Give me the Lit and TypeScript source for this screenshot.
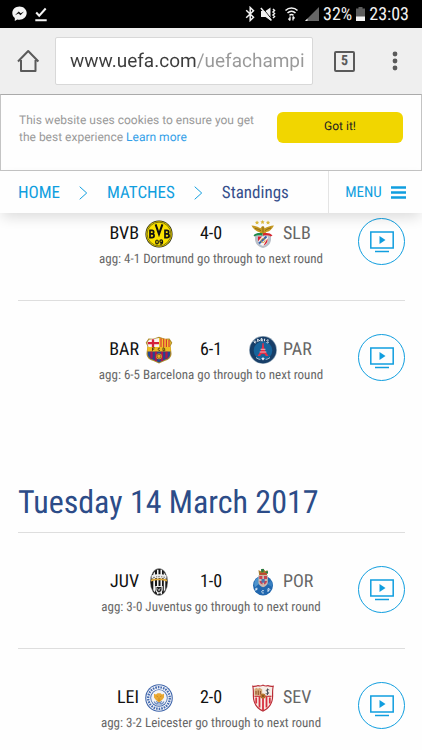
import { LitElement, html, svg, css, nothing, TemplateResult } from "lit";
import { customElement, property } from "lit/decorators.js";

interface Team { code: string; crest: string; }
interface Match { home: Team; away: Team; score: string; note: string; }

const CRESTS: Record<string, TemplateResult> = {
  bvb: svg`
    <circle cx="14" cy="14" r="13.6" fill="#2a2a12"/>
    <circle cx="14" cy="14" r="12.8" fill="#fce300"/>
    <circle cx="14" cy="14" r="11.9" fill="none" stroke="#4a4512" stroke-width=".7"/>
    <g fill="none" stroke="#111" stroke-width="1.7" stroke-linejoin="miter">
      <path d="M5 10v8M4.2 10.4H7c2.3 0 2.3 3.4 0 3.4H5M7 13.8c2.8 0 2.8 3.9 0 3.9H4.2"/>
      <path d="M20 10v8M19.2 10.4H22c2.3 0 2.3 3.4 0 3.4H20M22 13.8c2.8 0 2.8 3.9 0 3.9H19.2"/>
      <path d="M10.6 4.4 14 14.2 17.4 4.4" stroke-width="2"/>
    </g>
    <g fill="none" stroke="#111" stroke-width="1.2">
      <ellipse cx="12" cy="22" rx="1.3" ry="2"/><circle cx="16.2" cy="21.2" r="1.3"/><path d="M17.5 21v1.4c0 1.6-1.6 1.9-2.6 1.4"/>
    </g>`,
  slb: svg`
    <g fill="#e0bd3c"><path d="m8 .4.7 1.3 1.4.2-1 1 .3 1.5L8 3.700l-1.300.7.3-1.500-1.100-1 1.500-.2zM13.500 0l.7 1.300 1.400.2-1 1 .3 1.500-1.400-.7-1.300.7.3-1.500-1.100-1 1.500-.2zM19 .4l.7 1.300 1.400.2-1 1 .3 1.500-1.400-.7-1.300.7.3-1.500-1.100-1 1.500-.2z"/></g>
    <path d="M2.500 5.500c3.500.3 6.500 1.200 9 2.700l1.500-2 2 .2.600 1.900c2.600-1.700 5.700-2.700 9.400-2.900-2.300 4.200-5 6-7.600 6.700l-2 2.400h-3l-1.800-2.300C7.300 11.200 4.500 9.400 2.500 5.500z" fill="#c69a22"/>
    <path d="M6 8.500c2.500.3 4.500 1.100 6 2.200M22 8c-2.500.5-4.500 1.500-6 2.600M14 6.500v6" stroke="#7f5d16" fill="none" stroke-width=".8"/>
    <path d="M6 15h16v4c0 4.500-3 7.600-8 9-5-1.400-8-4.500-8-9z" fill="#b9bfc8"/>
    <path d="M4.500 15.500c2-2.500 5-3 9-2.300v2.500c-3-.6-6-.4-7.700.7z" fill="#1e8a4b"/>
    <path d="M23.500 15.500c-2-2.500-5-3-9.500-2.300v2.500c3-.6 6-.4 7.700.7z" fill="#d8262f"/>
    <path d="M9 16.500h10v3c0 3.300-2 5.500-5 6.500-3-1-5-3.200-5-6.500z" fill="#f4f4f4"/>
    <path d="M9 16.500h4l-4 5z" fill="#da1f30"/>
    <path d="m10 23.500 7.500-7" stroke="#315fb0" stroke-width="2"/>
    <path d="M18.500 18.500v2.500c-.6 2.300-2 3.800-4 4.600z" fill="#da1f30"/>
    <circle cx="14" cy="20.500" r="2" fill="none" stroke="#d19b2b" stroke-width=".8"/>`,
  bar: svg`
    <path d="M3.500 2.500 8 2.800 14 .7l6 2.100 4.500-.3 2.800 4.200-1.700 3.300.9 7.500c0 4-3 6.500-7 7.500L14 27.600 8.500 25c-4-1-7-3.500-7-7.500l.9-7.500L.7 6.700z" fill="#ae8b2c"/>
    <path d="M4 3.700 14 2v9H3.500L2.200 6.800z" fill="#f8f3f0"/>
    <path d="M8 3.200v7.800M2.800 7.200H14" stroke="#d41f3a" stroke-width="2.300"/>
    <path d="m14 2 10 1.700 1.800 3.100-1.300 4.200H14z" fill="#f4c52f"/>
    <path d="M16 2.300V11M18.700 2.800V11M21.400 3.200V11M24 4v7" stroke="#d73932" stroke-width="1.200"/>
    <path d="M2.800 15.500h22.400v2.300c0 3.400-2.600 5.400-6.200 6.200L14 26.400 9 24c-3.600-.8-6.200-2.800-6.200-6.200z" fill="#254590"/>
    <path d="M6.500 15.500v7M11 15.500V25M17 15.500V25M21.500 15.500v7" stroke="#ad174c" stroke-width="2.300"/>
    <path d="M2.300 11h23.400v4.300H2.300z" fill="#efbd20"/>
    <path d="M7.500 14.800v-3h2.200M7.500 13.200h1.700M15 12.200c-2.500-1-2.500 3 0 2.200M18 11.800v3h1.300c1.400-.5 1-1.300-.2-1.500.9-.5.600-1.500-1.100-1.500z" fill="none" stroke="#4b3517" stroke-width=".9"/>
    <circle cx="14" cy="20.300" r="2.900" fill="#e8ad27"/><path d="m12 19 2-.8 2 1.200-.4 2.400-2 .6-1.600-1.300z" fill="none" stroke="#6b4c24" stroke-width=".7"/>`,
  par: svg`
    <circle cx="14" cy="14" r="13.900" fill="#8fa3b5"/>
    <circle cx="14" cy="14" r="13.200" fill="#173e68"/>
    <circle cx="14" cy="14.500" r="9.300" fill="#17649c"/>
    <path d="m6.200 7.400-1.400-2M5 5.500c1.400-1.300 2.500.2 1.400 1.300M9 6 8.500 3.200l2.600 1.800M12.200 5.300 12 2.700c2-.4 2.200 1.200.3 1.400l1.700 1M15.700 2.700l-.3 2.500M19.700 4.200c-2.300-1-2.300.7-.8 1.300 1.200.7 0 2-1.400 1" fill="none" stroke="#eef3f7" stroke-width="1"/>
    <path d="M13.500 7h1l.6 4.500 1.500 4 2.900 4.500h-2.700c-.6-1.600-1.500-2.300-2.800-2.300s-2.200.7-2.800 2.300H8.500l2.900-4.500 1.500-4z" fill="#e52e47"/>
    <path d="M11.500 13.300h5M10.600 16h6.800" stroke="#f7e8e8" stroke-width=".7"/>
    <path d="M7 21.500c1.500 1.200 3 1.700 4.300 2M21 21.500c-1.500 1.200-3 1.700-4.300 2" stroke="#b9d0e0" fill="none" stroke-width="1"/>
    <path d="m12.300 22.500 1.700 2 1.700-2-1.700-1.300z" fill="#e6edf2"/>`,
  juv: svg`
    <ellipse cx="14" cy="14" rx="9" ry="13.700" fill="#777"/>
    <ellipse cx="14" cy="14" rx="8.300" ry="13" fill="#161616"/>
    <path d="M8.300 5.700 10 3.500v21l-1.700-2.300zM12 1.700h1.500v24.600H12zM15.500 1.700H17v24.600h-1.500zM18.800 4.200l1.500 2.500v14.800l-1.500 2.500z" fill="#f4f4f4"/>
    <path d="M6.500 7.300c4-1.500 11-1.500 15 0v3.500c-4-1.200-11-1.200-15 0z" fill="#eee"/>
    <path d="M6 11.500c4.500-1.400 11.500-1.400 16 0v1.900c-4.500-1.500-11.500-1.500-16 0z" fill="#dda73b"/>
    <path d="M8 9.400h2M11 8.800h1.200M13.200 8.700h1.600M16 8.800h1.400M18.400 9.200H20" stroke="#777" stroke-width="1"/>
    <path d="M10.300 18h7.400v3.700c0 2-1.600 3.300-3.700 4-2.100-.7-3.700-2-3.700-4z" fill="#eee"/>
    <path d="M11.500 19h5v2.600c0 1.500-1 2.300-2.500 2.900-1.500-.6-2.500-1.400-2.500-2.900z" fill="#222"/>
    <path d="m12.500 20.500 1.500 2.200 1.200-2.500" stroke="#ddd" fill="none" stroke-width=".8"/>`,
  por: svg`
    <circle cx="14" cy="17.500" r="10" fill="#2167ae"/>
    <path d="M6 12.500c2-3 4.500-4.300 8-4.300l-2 6-6 5c-1-2-1-4.500 0-6.700z" fill="#4d94ce"/>
    <path d="M22 12.500c1 1.500 1.700 4 1.300 6.500L18 16z" fill="#377fc1"/>
    <path d="m9.500 2 2 1.300L14 .5l2.500 2.800 2-1.300-.6 5h-7.800z" fill="#a77a2b"/>
    <path d="M12 1h3l-.5 3-2 .5zM16 4l3-1v3z" fill="#267c45"/>
    <path d="M11 5.800h6.500" stroke="#c7343c" stroke-width="1.300"/>
    <path d="M9.500 7h9.300v7.500c0 2.300-2 3.800-4.700 4.700-2.700-.9-4.600-2.400-4.600-4.700z" fill="#cbb9ae"/>
    <path d="M10.300 8h3v3h-3zM15 8h3v3h-3zM10.500 13h3v3.500c-1.500-.5-2.600-1.300-3-3.500zM15 13h3c-.2 2-1.300 3-3 3.600z" fill="#c84252"/>
    <path d="M12.500 11h3.200v3.700h-3.200z" fill="#4774af"/>
    <path d="M8.500 20.300H6.800v2.400M7 21.500h1.300M14.800 22.700c-2.500-1.200-3 3 0 2.300M19 24v-3.300c2.300-.5 2.400 1.900 0 1.900" fill="none" stroke="#d6e6f3" stroke-width="1"/>`,
  lei: svg`
    <circle cx="14" cy="14" r="13.800" fill="#3e64aa"/>
    <circle cx="14" cy="14" r="12.700" fill="#f6f7fa"/>
    <circle cx="14" cy="14" r="10.800" fill="none" stroke="#456bb0" stroke-width="2.300" stroke-dasharray="1.600 1"/>
    <circle cx="14" cy="14" r="8.700" fill="#4268ad"/>
    <circle cx="14" cy="14" r="7.900" fill="#f1f3f7"/>
    <path d="M9 17.500c1.500 2.600 3 3.500 5 3.500s3.500-.9 5-3.500M11 20l6-2.500M17 20l-6-2.500" fill="none" stroke="#6d8cc1" stroke-width="1.100"/>
    <path d="m9 9.800 2 .6 1.500-1.200h3l1.500 1.200 2-.6 0 3.700-1.700 2.300L14 18.500l-3.300-2.700L9 13.500z" fill="#e9a832"/>
    <path d="m11.500 12 1.500.7M16.500 12l-1.500.7M14 13.500v2M12.700 16.200h2.600" stroke="#b9781d" stroke-width=".6"/>`,
  sev: svg`
    <path d="M3 1.500c2.500.4 4.500.2 6-.6 1.800.8 3.200.6 5-.4 1.800 1 3.200 1.200 5 .4 1.500.8 3.500 1 6 .6-1 3-.8 7-.8 10.500 0 7.500-4 13-10.200 15.700C7.800 25 3.800 19.500 3.800 12c0-3.500.2-7.500-.8-10.500z" fill="#b92c35"/>
    <path d="M4.500 3c1.800.1 3.300-.2 4.500-.8 1.600.6 3.300.3 4.900-.5 1.600.8 3.300 1.100 4.900.5 1.200.6 2.900.9 4.700.8-.5 2.800-.5 6-.5 9.200 0 6.700-3.300 11.500-9 14-5.700-2.500-9-7.300-9-14 0-3.200 0-6.400-.5-9.200z" fill="#f6eee7"/>
    <path d="M7.200 13.500v6M10.500 13v10.500M14 13v13M17.500 13v10.500M20.800 13.500v6" stroke="#d7303f" stroke-width="1.800"/>
    <path d="m5.500 5 2-1.300 1.500 1 1.700-1 2.500 1.700v6H5.500z" fill="#d6a878"/>
    <path d="M7 7v3.500M9.300 6.500V11M11.500 7v3.500" stroke="#94552f" stroke-width="1.100"/>
    <path d="M5.500 12.300h17" stroke="#c73439" stroke-width="1.200"/>
    <path d="M18.500 4.500v6.500M20.300 6c-2.800-1.500-4 1-1.800 1.700 2.400.8 1 3.200-1.800 1.800" fill="none" stroke="#444b55" stroke-width=".9"/>
    <circle cx="14" cy="12" r="2.600" fill="#b87630"/><path d="m12.800 11 2.500 2M15.300 11l-2.500 2" stroke="#744418" stroke-width=".7"/>`,
};

@customElement("match-row")
export class MatchRow extends LitElement {
  @property({ attribute: false }) match!: Match;

  static styles = css`
    :host { display: block; }
    .row {
      display: grid;
      grid-template-columns: 46px 1fr 47px;
      padding: 33px 0 32px;
    }
    .info { grid-column: 2; min-width: 0; }
    .line {
      display: grid;
      grid-template-columns: 1fr 40px 64px 40px 1fr;
      align-items: center;
      height: 32px;
      font-size: 18px;
      line-height: 24px;
      color: #111;
    }
    .home { text-align: right; }
    .score { text-align: center; }
    .away { color: #666; }
    .crest { display: block; width: 28px; height: 28px; margin: 0 auto; }
    .note {
      margin: 0;
      padding-top: 2px;
      text-align: center;
      white-space: nowrap;
      font-size: 13px;
      line-height: 16px;
      color: #666;
    }
    .watch {
      width: 47px;
      height: 47px;
      padding: 0;
      border: 1px solid #109edf;
      border-radius: 50%;
      background: #fefefe;
      display: grid;
      place-items: center;
    }
    .watch svg { display: block; width: 24px; height: 22px; }
  `;

  private crest(t: Team) {
    return html`<svg class="crest" viewBox="0 0 28 28" aria-hidden="true">${CRESTS[t.crest]}</svg>`;
  }

  render() {
    const m = this.match;
    return html`
      <article class="row">
        <div class="info">
          <div class="line">
            <span class="home">${m.home.code}</span>${this.crest(m.home)}
            <span class="score">${m.score}</span>
            ${this.crest(m.away)}<span class="away">${m.away.code}</span>
          </div>
          <p class="note">${m.note}</p>
        </div>
        <button class="watch" aria-label="Watch highlights">
          <svg viewBox="0 0 24 22" fill="none" stroke="#109edf">
            <path d="M.8.9h22.400v16.200H.8z" stroke-width="1.500"/>
            <path d="M5 20.500h14" stroke-width="1.500"/>
            <path d="M9.500 5v8l6-4z" fill="#109edf" stroke="none"/>
          </svg>
        </button>
      </article>`;
  }
}

@customElement("app-root")
export class AppRoot extends LitElement {
  private wednesday: Match[] = [
    { home: { code: "BVB", crest: "bvb" }, away: { code: "SLB", crest: "slb" }, score: "4-0", note: "agg: 4-1 Dortmund go through to next round" },
    { home: { code: "BAR", crest: "bar" }, away: { code: "PAR", crest: "par" }, score: "6-1", note: "agg: 6-5 Barcelona go through to next round" },
  ];
  private tuesday: Match[] = [
    { home: { code: "JUV", crest: "juv" }, away: { code: "POR", crest: "por" }, score: "1-0", note: "agg: 3-0 Juventus go through to next round" },
    { home: { code: "LEI", crest: "lei" }, away: { code: "SEV", crest: "sev" }, score: "2-0", note: "agg: 3-2 Leicester go through to next round" },
  ];

  static styles = css`
    :host {
      display: block;
      height: 100vh;
      overflow: hidden;
      background: #fefefe;
      font-family: "Roboto Condensed", "Liberation Sans Narrow", Roboto, sans-serif;
      text-rendering: geometricPrecision;
    }
    button, input { text-rendering: inherit; }
    .status {
      display: flex;
      align-items: center;
      height: 28px;
      padding: 0 13px 0 12px;
      background: #000;
      color: #f2f2f2;
      font-size: 18px;
      line-height: 28px;
    }
    .status span { padding-top: 2px; }
    .status svg { display: block; flex: none; }
    .left { display: flex; align-items: center; gap: 8px; margin-right: auto; }
    .right { display: flex; align-items: center; gap: 4px; }
    .bar {
      display: flex;
      align-items: center;
      height: 66px;
      box-sizing: border-box;
      padding: 0 22px 0 16px;
      background: #efefef;
      font-family: Roboto, sans-serif;
    }
    .icon { display: block; padding: 0; border: 0; background: none; flex: none; }
    .icon svg { display: block; }
    .url {
      flex: 1;
      min-width: 0;
      height: 48px;
      box-sizing: border-box;
      margin: 0 21px 0 15px;
      padding: 0 4px 0 14px;
      border: 1px solid #d8d8d8;
      border-radius: 2px;
      background: #fff;
      display: flex;
    }
    .address {
      flex: 1;
      min-width: 0;
      padding: 0;
      border: 0;
      outline: 0;
      font: 19px/24px Roboto, sans-serif;
      color: transparent;
      background: linear-gradient(90deg, #3c3c3c 126px, #999 126px);
      -webkit-background-clip: text;
      background-clip: text;
    }
    .icon.tabs {
      width: 21px;
      height: 21px;
      box-sizing: border-box;
      margin-right: 35px;
      border: 2px solid #5a5a5a;
      border-radius: 2px;
      font: bold 14px/17px "Roboto Condensed", Roboto, sans-serif;
      color: #5a5a5a;
      text-align: center;
    }
    .cookie {
      display: flex;
      align-items: flex-start;
      justify-content: space-between;
      height: 77px;
      box-sizing: border-box;
      padding: 17px 18px 0;
      border: 1px solid #c4c4c4;
      border-top-color: #aaa;
      font-family: Roboto, sans-serif;
      font-size: 12px;
      line-height: 17px;
      color: #999;
      background: #fefefe;
    }
    .cookie p { margin: 0; width: 236px; }
    .cookie a { color: #32a0e8; text-decoration: none; }
    .accept {
      width: 126px;
      height: 31px;
      padding: 0 0 3px;
      border: 0;
      border-radius: 6px;
      background: #f1d600;
      color: #222;
      font: 12px/18px Roboto, sans-serif;
    }
    .nav {
      position: relative;
      z-index: 1;
      display: flex;
      align-items: center;
      height: 42px;
      padding-left: 18px;
      background: #fefefe;
      box-shadow: 0 6px 14px -2px rgba(0, 0, 0, 0.14);
      font-size: 17px;
      line-height: 24px;
    }
    .crumbs { display: flex; align-items: center; flex: 1; gap: 19px; padding-top: 1px; }
    .crumbs svg { display: block; }
    .crumbs a { color: #109edf; text-decoration: none; }
    .crumbs .current { color: #354f8c; }
    .menu {
      display: flex;
      align-items: center;
      justify-content: center;
      gap: 9px;
      width: 94px;
      height: 42px;
      padding: 0;
      border: 0;
      border-left: 1px solid #e4e4e4;
      background: none;
      color: #109edf;
      font: 15px/24px "Roboto Condensed", "Liberation Sans Narrow", Roboto, sans-serif;
    }
    .content { margin: -28px 17px 0 18px; }
    .rule { border-bottom: 1px solid #dedede; }
    .day {
      margin: 0;
      padding: 66px 0 10px;
      border-bottom: 1px solid #dedede;
      font-size: 32px;
      line-height: 40px;
      font-weight: 400;
      color: #2c4c88;
    }
  `;

  private matches(list: Match[]) {
    return list.map((m, i) => html`<match-row class=${i < list.length - 1 ? "rule" : nothing} .match=${m}></match-row>`);
  }

  private chevron() {
    return html`<svg width="9" height="14" viewBox="0 0 9 14" fill="none" stroke="#109edf" aria-hidden="true"><path d="m.7.700 7 6.300-7 6.300"/></svg>`;
  }

  render() {
    return html`
      <div class="status">
        <div class="left">
          <svg width="15" height="16" viewBox="0 0 15 16"><path d="M7.500.5C3.500.5.300 3.300.300 7c0 2.200 1 3.900 2.500 5.100v3l2.500-1.500c.7.200 1.400.2 2.200.2 4 0 7.200-3 7.200-6.700S11.500.5 7.500.5z" fill="#f4f4f4"/><path d="m3 9.300 3.700-3.700 2 1.700L12 5.500 8.500 9.300l-2-1.700z" fill="#111"/></svg>
          <svg width="12" height="15" viewBox="0 0 12 15" fill="none" stroke="#f4f4f4" stroke-width="2"><path d="m1.200 5.500 3 3.200L10.700 1.500M.3 13.300h11.400"/></svg>
        </div>
        <div class="right">
          <svg width="11" height="16" viewBox="0 0 11 16" fill="none" stroke="#f2f2f2" stroke-width="1.500"><path d="m1.200 4.300 7.300 7-3.300 3.200v-13l3.300 3.200-7.300 7"/></svg>
          <svg width="17" height="16" viewBox="0 0 17 16"><path d="M1 5h4.500L10.500 1.500v13L5.500 11H1z" fill="#f2f2f2"/><path d="m2 1.500 10 12" stroke="#000" stroke-width="1"/><path d="m.9 2 10.500 12.500" stroke="#f2f2f2" stroke-width="1.500"/><path d="m13 3 1.500 1.500L13 6l1.500 1.500L13 9l1.500 1.500L13 12" fill="none" stroke="#f2f2f2" stroke-width="1.500"/></svg>
          <svg width="20" height="16" viewBox="0 0 20 16" fill="none" stroke="#f2f2f2" stroke-width="1.500"><path d="M4.500 4.500c3.300-3.300 8.700-3.300 12 0M6.500 7c2.300-2.200 5.700-2.200 8 0M8.500 9.300c1.200-1 2.800-1 4 0"/><path d="M9 10.500v4M7.500 12.500 9 14.500M12 14.500v-4M12 10.500l1.500 2" stroke-width="1.300"/></svg>
          <svg width="14" height="14" viewBox="0 0 14 14"><path d="M0 14 14 0v14z" fill="#666"/><path d="M0 14 2.500 11.500V14z" fill="#eee"/></svg>
          <span>32%</span>
          <svg width="9" height="14" viewBox="0 0 9 14"><path d="M2.500 0h4v1.500H9V14H0V1.500h2.500z" fill="#5d5d5d"/><path d="M0 9.500h9V14H0z" fill="#f4f4f4"/></svg>
          <span>23:03</span>
        </div>
      </div>
      <div class="bar">
        <button class="icon" aria-label="Home"><svg width="24" height="24" viewBox="0 0 24 24" fill="none" stroke="#5a5a5a" stroke-width="2"><path d="M2 12.500 12.200 2 22.400 12.500M5 11v11h14.500V11" stroke-linejoin="round"/></svg></button>
        <div class="url"><input class="address" aria-label="Address" .value=${"www.uefa.com/uefachampi"} spellcheck="false"></div>
        <button class="icon tabs" aria-label="Open tabs">5</button>
        <button class="icon" aria-label="More options"><svg width="10" height="20" viewBox="0 0 10 20" fill="#5a5a5a"><circle cx="5" cy="3" r="2.400"/><circle cx="5" cy="10" r="2.400"/><circle cx="5" cy="17" r="2.400"/></svg></button>
      </div>
      <section class="cookie">
        <p>This website uses cookies to ensure you get the best experience <a href="#cookies">Learn more</a></p>
        <button class="accept">Got it!</button>
      </section>
      <nav class="nav">
        <div class="crumbs">
          <a href="#home">HOME</a>${this.chevron()}
          <a href="#matches">MATCHES</a>${this.chevron()}
          <a class="current" href="#standings">Standings</a>
        </div>
        <button class="menu">MENU<svg width="15" height="13" viewBox="0 0 15 13" stroke="#109edf" stroke-width="2.500"><path d="M0 1.500h15M0 6.500h15M0 11.500h15"/></svg></button>
      </nav>
      <main class="content">
        ${this.matches(this.wednesday)}
        <h2 class="day">Tuesday 14 March 2017</h2>
        ${this.matches(this.tuesday)}
      </main>`;
  }
}
